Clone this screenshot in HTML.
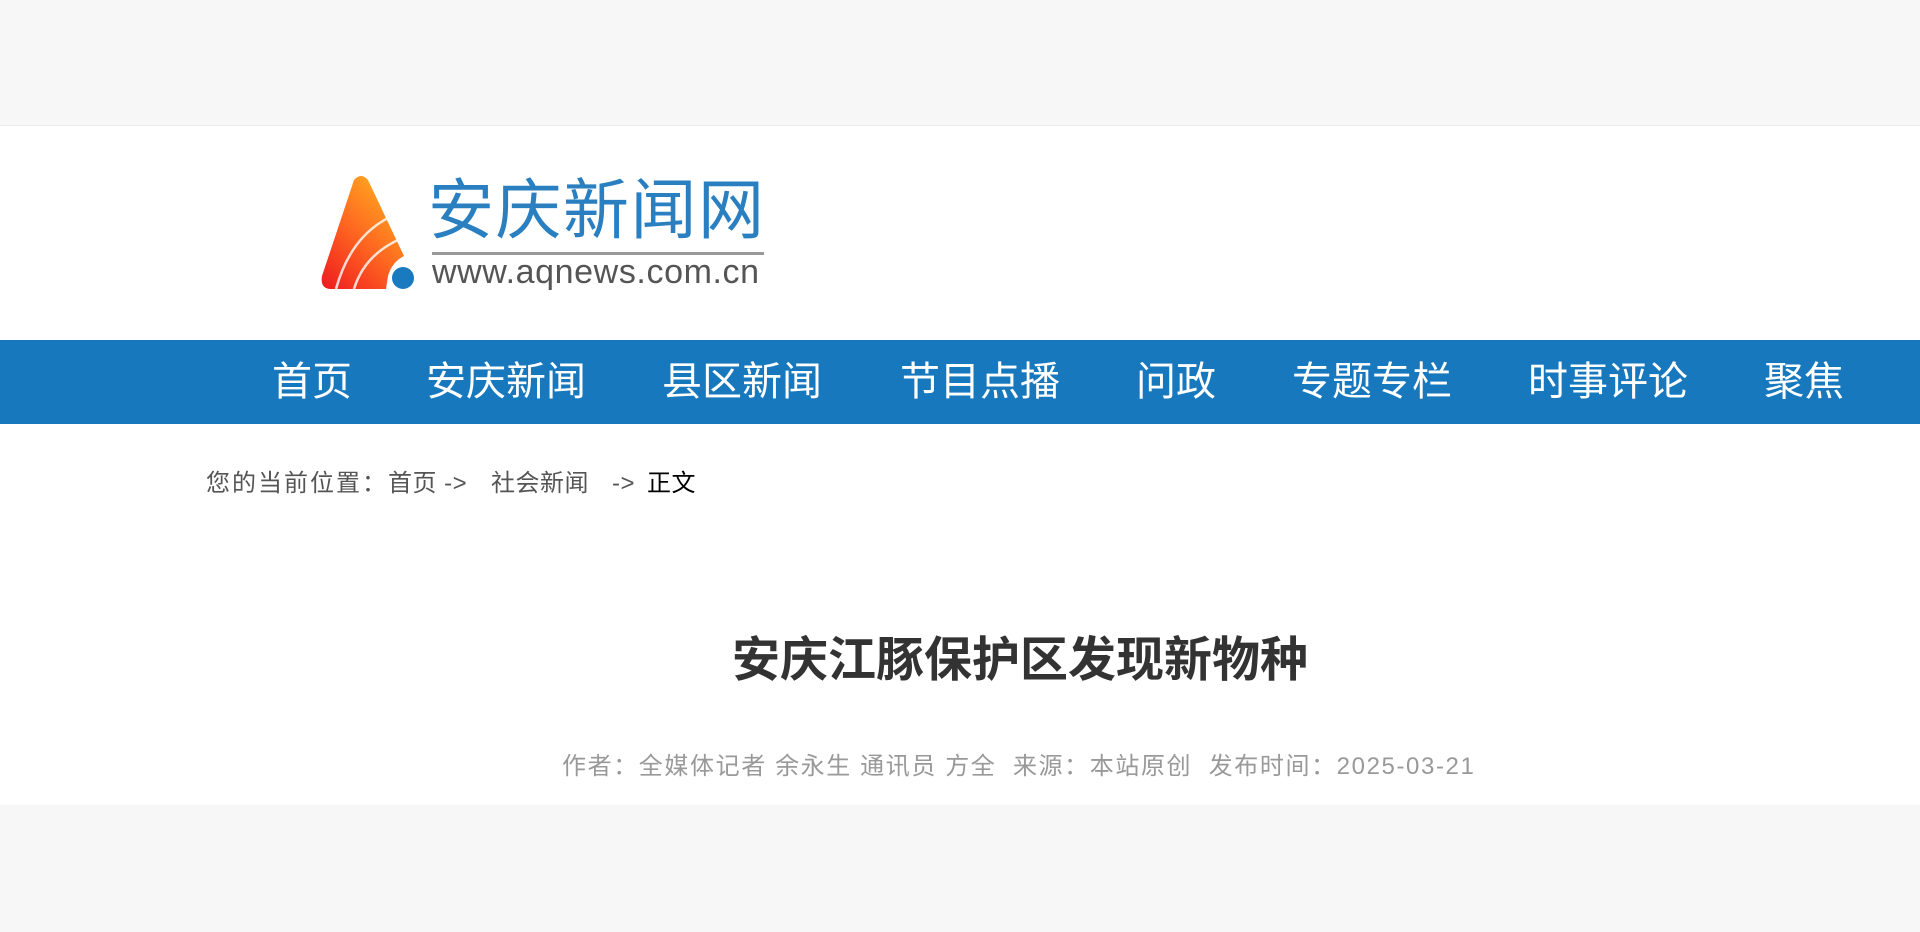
<!DOCTYPE html>
<html><head><meta charset="utf-8"><style>
*{margin:0;padding:0;box-sizing:border-box}
body{width:1920px;height:932px;background:#f7f7f7;font-family:"Liberation Sans","Noto Sans CJK SC",sans-serif;position:relative;overflow:hidden}
.white{position:absolute;left:0;top:125px;width:1920px;height:680px;background:#fff;border-top:1px solid #ececec}
.abs{position:absolute;white-space:nowrap}
.nav{position:absolute;left:0;top:340px;width:1920px;height:84px;background:#1778bd}
.nav span{position:absolute;top:0;line-height:84px;color:#fff;font-size:40px}
.bc{font-size:24px;color:#555;top:469px;line-height:30px;letter-spacing:0.5px}
</style></head><body>
<div class="white"></div>
<svg class="abs" style="left:318px;top:172px" width="100" height="120" viewBox="0 0 100 120">
<defs><linearGradient id="g" x1="0.8" y1="0" x2="0.1" y2="1"><stop offset="0" stop-color="#ffb020"/><stop offset="0.5" stop-color="#ff6a20"/><stop offset="1" stop-color="#f02020"/></linearGradient></defs>
<path d="M36 8 Q43 0 50 8 L86 84 Q74 90 70 104 L68 117 L12 117 Q2 116 4 104 Z" fill="url(#g)"/>
<path d="M70 46 Q32 66 18 117" stroke="#fff" stroke-width="2.5" fill="none" opacity=".8"/>
<path d="M80 68 Q46 84 36 117" stroke="#fff" stroke-width="2.5" fill="none" opacity=".8"/>
<circle cx="85" cy="106" r="11" fill="#1a7ac0"/>
</svg>
<div class="abs" style="left:428px;top:170px;font-size:66px;line-height:80px;color:#2a7fc0;letter-spacing:1.5px">安庆新闻网</div>
<div class="abs" style="left:432px;top:252px;width:332px;height:3px;background:#999"></div>
<div class="abs" style="left:432px;top:251px;font-size:34px;line-height:42px;color:#555;letter-spacing:0.6px">www.aqnews.com.cn</div>
<div class="nav">
<span style="left:272px">首页</span><span style="left:426px">安庆新闻</span><span style="left:662px">县区新闻</span><span style="left:900px">节目点播</span><span style="left:1136px">问政</span><span style="left:1292px">专题专栏</span><span style="left:1528px">时事评论</span><span style="left:1764px">聚焦</span>
</div>
<div class="abs bc" style="left:206px;letter-spacing:2px">您的当前位置：</div>
<div class="abs bc" style="left:388px">首页 -&gt;</div>
<div class="abs bc" style="left:491px">社会新闻</div>
<div class="abs bc" style="left:612px">-&gt;</div>
<div class="abs bc" style="left:647px;color:#000">正文</div>
<div class="abs" style="left:0;width:1920px;text-align:center;top:630px;padding-left:120px;font-size:48px;line-height:62px;font-weight:bold;color:#333">安庆江豚保护区发现新物种</div>
<div class="abs" style="left:562px;top:752px;font-size:24px;line-height:30px;color:#999;letter-spacing:1.6px">作者：全媒体记者 余永生 通讯员 方全&nbsp;&nbsp;来源：本站原创&nbsp;&nbsp;发布时间：2025-03-21</div>
</body></html>
